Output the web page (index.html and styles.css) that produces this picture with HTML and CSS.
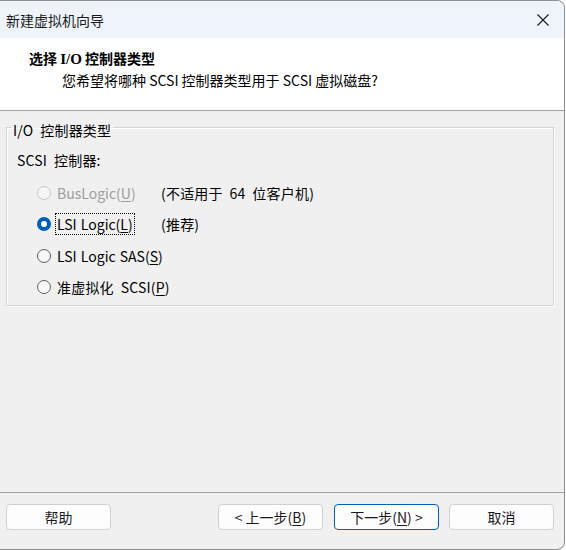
FILE: index.html
```html
<!DOCTYPE html>
<html lang="zh-CN">
<head>
<meta charset="utf-8">
<title>新建虚拟机向导</title>
<link rel="stylesheet" href="styles.css">
</head>
<body>
<div class="window">
  <div class="titlebar">
    <span class="title">新建虚拟机向导</span>
    <span class="close">
      <svg width="12" height="12" viewBox="0 0 12 12"><path d="M0.5 0.5 L11.5 11.5 M11.5 0.5 L0.5 11.5" stroke="#1a1a1a" stroke-width="1.1" fill="none"/></svg>
    </span>
  </div>
  <div class="header">
    <div class="h-title"><span class="cjk">选择</span> <span class="lat">I/O</span> <span class="cjk">控制器类型</span></div>
    <div class="h-sub">您希望将哪种 SCSI 控制器类型用于 SCSI 虚拟磁盘?</div>
  </div>
  <div class="main">
    <fieldset class="group">
      <legend class="wide">I/O 控制器类型</legend>
      <div class="sub-label wide">SCSI 控制器:</div>
      <div class="options">
        <div class="opt disabled">
          <span class="radio"></span>
          <span class="lbl">BusLogic(<u>U</u>)</span>
          <span class="note wide">(不适用于 64 位客户机)</span>
        </div>
        <div class="opt">
          <span class="radio checked"></span>
          <span class="lbl latin"><span class="focus">LSI Logic(<u>L</u>)</span></span>
          <span class="note wide">(推荐)</span>
        </div>
        <div class="opt">
          <span class="radio"></span>
          <span class="lbl latin">LSI Logic SAS(<u>S</u>)</span>
          <span class="note"></span>
        </div>
        <div class="opt">
          <span class="radio"></span>
          <span class="lbl wide">准虚拟化 SCSI(<u>P</u>)</span>
          <span class="note"></span>
        </div>
      </div>
    </fieldset>
  </div>
  <div class="footer">
    <button class="btn">帮助</button>
    <span class="spacer"></span>
    <button class="btn">&lt; 上一步(<u>B</u>)</button>
    <button class="btn default">下一步(<u>N</u>) &gt;</button>
    <button class="btn">取消</button>
  </div>
</div>
</body>
</html>
```

FILE: styles.css
```css
html, body {
  margin: 0;
  padding: 0;
  background: #ffffff;
}
body {
  font-family: "Noto Sans CJK SC", "Noto Sans", sans-serif;
  font-size: 14px;
  color: #1a1a1a;
}
.window {
  width: 564px;
  height: 548px;
  border: 1px solid #8f8f8f;
  border-left: none;
  border-radius: 0 8px 8px 0;
  overflow: hidden;
  background: #f0f0f0;
  display: flex;
  flex-direction: column;
}
.titlebar {
  height: 37px;
  flex: none;
  background: #eef4f9;
  display: flex;
  align-items: center;
  padding: 0 15px 0 6px;
}
.title {
  flex: 1;
  line-height: 20px;
  color: #1a1a1a;
}
.close {
  display: flex;
  width: 12px;
  height: 12px;
}
.header {
  height: 72px;
  flex: none;
  background: #ffffff;
  border-bottom: 1px solid #a0a0a0;
  padding: 0 0 0 29px;
  box-sizing: content-box;
}
.h-title {
  margin-top: 10px;
  line-height: 20px;
  font-weight: bold;
  color: #000;
}
.h-title .lat {
  font-family: "Liberation Serif", serif;
  font-size: 15px;
}
.h-sub {
  margin-top: 1px;
  padding-left: 33px;
  line-height: 20px;
  color: #000;
}
.main {
  flex: 1;
  padding: 3px 10px 0 6px;
}
.group {
  margin: 0;
  padding: 0 10px 2px 10px;
  border: 1px solid #d5d5d5;
  box-shadow: 1px 1px 0 #ffffff, inset 1px 1px 0 #ffffff;
  min-width: 0;
}
.group legend {
  padding: 6px 2px 0 2px;
  margin-left: -6px;
  line-height: 20px;
  color: #000;
}
.wide {
  word-spacing: 3.5px;
  letter-spacing: 0.2px;
}
.latin {
  word-spacing: 1px;
}
.sub-label {
  margin-top: 10px;
  line-height: 20px;
  color: #000;
}
.options {
  margin-top: 7px;
  display: flex;
  flex-direction: column;
}
.opt {
  height: 31.5px;
  display: grid;
  grid-template-columns: 14px 98px auto;
  column-gap: 6px;
  align-items: center;
  padding-left: 20px;
  color: #000;
}
.opt.disabled .lbl {
  color: #9d9d9d;
}
.radio {
  width: 14px;
  height: 14px;
  box-sizing: border-box;
  border-radius: 50%;
  border: 1px solid #5d5d5d;
  background: #f8f8f8;
  display: flex;
  align-items: center;
  justify-content: center;
}
.opt.disabled .radio {
  border-color: #c6c6c6;
  background: #f5f5f5;
}
.radio.checked {
  border: none;
  background: #005fb8;
}
.radio.checked::after {
  content: "";
  width: 6px;
  height: 6px;
  border-radius: 50%;
  background: #ffffff;
}
.lbl {
  line-height: 20px;
  white-space: nowrap;
}
.focus {
  outline: 1px dotted #000;
  outline-offset: 0;
  margin-left: -1px;
  padding: 0 1px;
  display: inline-block;
}
.note {
  line-height: 20px;
  white-space: nowrap;
}
u {
  text-decoration-thickness: 1px;
  text-underline-offset: 2px;
}
.footer {
  flex: none;
  height: 45px;
  border-top: 1px solid #a0a0a0;
  display: flex;
  align-items: flex-start;
  padding: 11px 10px 0 6px;
  column-gap: 11px;
}
.spacer {
  flex: 1;
}
.btn {
  width: 105px;
  height: 26px;
  box-sizing: border-box;
  border: 1px solid #d0d0d0;
  border-radius: 4px;
  background: #fdfdfd;
  font-family: inherit;
  font-size: 14px;
  color: #1a1a1a;
  padding: 0;
  line-height: 20px;
}
.btn.default {
  border-color: #005fb8;
}
.btn.default + .btn {
  margin-left: -1px;
}
```
